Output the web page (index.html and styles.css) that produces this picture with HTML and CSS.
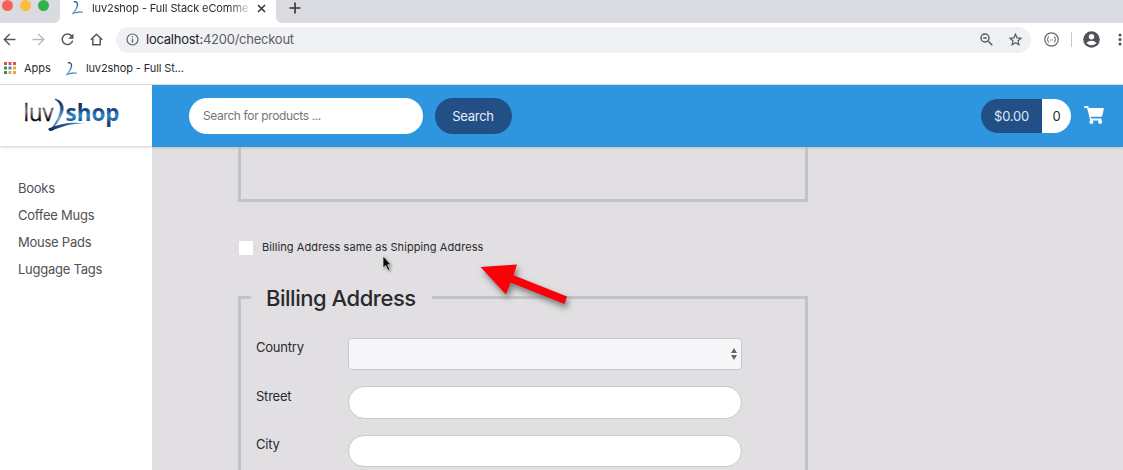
FILE: index.html
```html
<!DOCTYPE html>
<html lang="en">
<head>
<meta charset="utf-8">
<title>luv2shop - Full Stack eCommerce</title>
<link rel="stylesheet" href="styles.css">
</head>
<body>
<svg class="defs" width="0" height="0">
  <defs>
    <linearGradient id="swoosh" x1="0" y1="0" x2="0" y2="1"><stop offset="0" stop-color="#173f75"/><stop offset=".5" stop-color="#3f83c4"/><stop offset="1" stop-color="#7dbdeb"/></linearGradient>
    <symbol id="fav" viewBox="0 0 14 15"><path d="M2.800 1.700C5 1.400 6.800 2.300 6.500 5 6.100 8.500 4 11 1.800 13.300" fill="none" stroke="url(#swoosh)" stroke-width="1.400"/><path d="M1.200 14C4.500 11.500 8 11.300 12 12.200 8.500 12 4.500 12.700 1.200 14z" fill="#3b74ae" stroke="#3b74ae" stroke-width=".5"/></symbol>
  </defs>
</svg>
<div class="browser">
  <div class="tabs">
    <div class="lights"><i class="red"></i><i class="amber"></i><i class="green"></i></div>
    <div class="tab">
      <svg class="favicon" width="14" height="15"><use href="#fav"/></svg>
      <span class="tab-title">luv2shop - Full Stack eComme</span>
      <svg class="close" width="9" height="9" viewBox="0 0 9 9"><path d="M1 1l7 7M8 1L1 8" stroke="#333" stroke-width="1.500"/></svg>
    </div>
    <div class="newtab"><svg width="12" height="12" viewBox="0 0 12 12"><path d="M6 .5v11M.5 6h11" stroke="#333" stroke-width="1.600"/></svg></div>
  </div>
  <div class="toolbar">
    <div class="nav">
      <svg width="13" height="13" viewBox="0 0 13 13"><path d="M12.500 6.500H1.500M6.800 1L1.300 6.500 6.800 12" fill="none" stroke="#55585c" stroke-width="1.400"/></svg>
      <svg width="13" height="13" viewBox="0 0 13 13"><path d="M.5 6.500h11M6.200 1l5.500 5.500L6.200 12" fill="none" stroke="#b9babd" stroke-width="1.400"/></svg>
      <svg width="13" height="13" viewBox="0 0 13 13"><path d="M11.100 3.500A5.300 5.300 0 1 0 11.700 7.600" fill="none" stroke="#55585c" stroke-width="1.500"/><path d="M12.500.5v5.300H7.200z" fill="#55585c"/></svg>
      <svg width="13" height="13" viewBox="0 0 13 13"><path d="M.8 6.700L6.500 1.200l5.700 5.500M2.800 5.500v6.300h7.400V5.500" fill="none" stroke="#55585c" stroke-width="1.500"/></svg>
    </div>
    <div class="omnibox">
      <svg width="13" height="13" viewBox="0 0 13 13"><circle cx="6.500" cy="6.500" r="5.500" fill="none" stroke="#5f6368" stroke-width="1.200"/><path d="M6.500 5.700v4M6.500 3.200v1.400" stroke="#5f6368" stroke-width="1.300"/></svg>
      <span class="url"><b>localhost:</b>4200/checkout</span>
      <svg width="13" height="13" viewBox="0 0 13 13"><circle cx="5" cy="5" r="4" fill="none" stroke="#55585c" stroke-width="1.400"/><path d="M8 8l4.300 4.300M3.200 5h3.600" stroke="#55585c" stroke-width="1.400"/></svg>
      <svg class="star" width="13" height="13" viewBox="0 0 13 13"><path d="M6.500 1.200l1.550 3.650 3.950.35-3 2.600.9 3.900-3.400-2.050L3.100 11.700 4 7.800 1 5.200l3.950-.35z" fill="none" stroke="#55585c" stroke-width="1.200"/></svg>
    </div>
    <svg class="ext" width="15" height="15" viewBox="0 0 15 15"><circle cx="7.500" cy="7.500" r="6.700" fill="none" stroke="#66696d" stroke-width="1.200"/><path d="M5 4.500Q4 4.500 4 6T3 7.500Q4 7.500 4 9t1 1.500M10 4.500q1 0 1 1.500t1 1.500q-1 0-1 1.500t-1 1.500M6 8h1M8 8h1" fill="none" stroke="#66696d"/></svg>
    <span class="sep"></span>
    <svg class="person" width="17" height="17" viewBox="0 0 17 17"><circle cx="8.500" cy="8.500" r="8.300" fill="#505358"/><circle cx="8.500" cy="5.800" r="2.700" fill="#fff"/><path d="M3.300 12q5.200-4.500 10.400 0Q8.500 16.500 3.300 12z" fill="#fff"/></svg>
    <svg class="kebab" width="4" height="13" viewBox="0 0 4 13"><g fill="#505358"><circle cx="2" cy="2" r="1.500"/><circle cx="2" cy="6.500" r="1.500"/><circle cx="2" cy="11" r="1.500"/></g></svg>
  </div>
  <div class="bookmarks">
    <svg width="12" height="12" viewBox="0 0 12 12"><path d="M0 0h3v3H0zM4.500 0h3v3h-3zM9 0h3v3H9z" fill="#dd5044"/><path d="M0 4.500h3v3H0zM0 9h3v3H0z" fill="#2f9356"/><path d="M4.500 4.500h3v3h-3z" fill="#3b82f0"/><path d="M9 4.500h3v3H9zM4.500 9h3v3h-3zM9 9h3v3H9z" fill="#eda63a"/></svg>
    <span class="apps">Apps</span>
    <svg width="14" height="15"><use href="#fav"/></svg>
    <span class="mark">luv2shop - Full St...</span>
  </div>
</div>
<div class="page">
  <aside class="side">
    <div class="logo">
      <svg width="106" height="40" viewBox="0 0 106 40">
        <defs>
          <linearGradient id="grey" x1="0" y1="0" x2="0" y2="1"><stop offset=".25" stop-color="#333"/><stop offset=".48" stop-color="#777"/><stop offset=".75" stop-color="#050505"/></linearGradient>
          <linearGradient id="blue" x1="0" y1="0" x2="0" y2="1"><stop offset=".25" stop-color="#142b59"/><stop offset=".45" stop-color="#1c4a86"/><stop offset=".62" stop-color="#2f8ccd"/><stop offset=".85" stop-color="#173e78"/></linearGradient>
          <linearGradient id="tail" x1="0" y1="0" x2="1" y2="0"><stop offset="0" stop-color="#10264d"/><stop offset="1" stop-color="#46a5e3"/></linearGradient>
          <linearGradient id="two" x1="0" y1="0" x2="0" y2="1"><stop offset="0" stop-color="#142b59"/><stop offset=".3" stop-color="#225386"/><stop offset=".62" stop-color="#65b5e8"/><stop offset="1" stop-color="#142b59"/></linearGradient>
        </defs>
        <text class="luv" x="1.500" y="25" textLength="30" lengthAdjust="spacingAndGlyphs" fill="url(#grey)" stroke="url(#grey)" stroke-width=".3">luv</text>
        <text class="shop" x="43.500" y="25" textLength="54" lengthAdjust="spacingAndGlyphs" fill="url(#blue)">shop</text>
        <path d="M33 3C40 4.500 43 10 40.500 17 38 24 33 30 28.500 34 34 27 36.500 21 38.300 15 39.300 9 36.500 5.500 33 3.500z" fill="url(#two)" stroke="url(#two)" stroke-width=".5"/>
        <path d="M26.500 32.500C39 27 50 25.500 63 27.500 50 27.500 40 30 30 34.800 27.500 35.500 26 34.500 26.500 32.500z" fill="url(#tail)"/>
      </svg>
    </div>
    <nav class="menu"><a>Books</a><a>Coffee Mugs</a><a>Mouse Pads</a><a>Luggage Tags</a></nav>
  </aside>
  <main class="main">
    <header class="top">
      <div class="search">Search for products ...</div>
      <div class="button">Search</div>
      <div class="cart"><span class="total">$0.00</span><span class="count">0</span></div>
      <svg class="trolley" width="20" height="19" viewBox="0 0 20 19"><path d="M0 .8Q0 0 .8 0h2.700q.8 0 1 .8L4.700 2H19q1 0 .8 1l-1.600 7q-.2.800-1 .8H6.800l.3 1.700h9.600q1 0 .8 1l-.2.800a2 2 0 1 1-2.700.2H8.800a2 2 0 1 1-2.600-.2L3.100 2H.8Q0 2 0 1.200z" fill="#fff"/></svg>
    </header>
    <div class="content">
      <div class="previous"></div>
      <div class="same"><span class="box"></span><span>Billing Address same as Shipping Address</span></div>
      <section class="billing">
        <h3><span>Billing Address</span></h3>
        <div class="row"><label>Country</label><div class="select"><svg width="6" height="12" viewBox="0 0 6 12"><path d="M3 0l3 5H0zM0 7h6l-3 5z" fill="#666"/></svg></div></div>
        <div class="row"><label>Street</label><div class="input"></div></div>
        <div class="row"><label>City</label><div class="input"></div></div>
      </section>
    </div>
  </main>
</div>
<svg class="arrow" width="100" height="60" viewBox="0 0 100 60"><path d="M5.500 12L42 9.500l-3.500 10.800L92 41.500l-2.500 7.500L35.500 27.500l-4.500 12z" fill="#fb0007"/></svg>
<svg class="cursor" width="10" height="17" viewBox="0 0 10 17"><path d="M1 1v12l2.700-2.500 2.200 5 2-1-2.200-4.700H9z" fill="#080808" stroke="#f4f4f4" stroke-width=".7"/></svg>
</body>
</html>
```
FILE: styles.css
```css
* { box-sizing: border-box; }
body { margin: 0; width: 1123px; height: 470px; overflow: hidden; background: #fff; font-family: Inter, "Liberation Sans", sans-serif; color: #292a2e; }
svg { display: block; flex: none; }
.defs { position: absolute; }
.browser { height: 85px; border-bottom: 1px solid #dcdcdf; }
.tabs { display: flex; height: 23px; background: #fff; }
.lights { display: flex; gap: 7px; width: 60px; padding-left: 2px; background: #dadbe0; border-radius: 0 0 6px 0; overflow: hidden; }
.lights i { width: 11px; height: 11px; flex: none; border-radius: 50%; }
.red { background: #f96256; }
.amber { background: #fdbc40; }
.green { background: #35b14a; }
.tab { display: flex; width: 216px; padding-left: 11px; }
.tab-title { width: 161px; margin-left: 7px; white-space: nowrap; font-size: 11px; line-height: 16px; letter-spacing: -.1px; -webkit-mask-image: linear-gradient(90deg, #000 85%, transparent); mask-image: linear-gradient(90deg, #000 85%, transparent); }
.close { margin: 4px 0 0 4px; }
.newtab { flex: 1; padding: 2px 0 0 13px; background: #dadbe0; border-radius: 0 0 0 6px; }
.toolbar { display: flex; align-items: center; height: 33px; }
.nav { display: flex; gap: 16px; width: 116px; padding-left: 3px; }
.omnibox { display: flex; align-items: center; width: 915px; height: 26px; padding: 0 9px 0 10px; border-radius: 13px; background: #f0f1f5; }
.url { flex: 1; margin-left: 7px; padding-bottom: 1px; font-size: 13px; letter-spacing: -.24px; color: #5c5e62; }
.url b { font-weight: 400; color: #202124; }
.star { margin-left: 16px; }
.ext { margin-left: 13px; }
.sep { width: 1px; height: 15px; margin: 0 11px 0 12px; background: #c6c7ca; }
.kebab { margin-left: 18px; }
.bookmarks { display: flex; align-items: center; height: 25px; padding: 0 0 1px 4px; font-size: 11px; }
.apps { margin: 0 14px 0 8px; }
.mark { margin-left: 7px; letter-spacing: -.1px; }
.page { display: flex; height: 385px; }
.side { width: 152px; background: #fff; }
.logo { height: 61px; padding: 11px 0 0 22px; box-shadow: 0 1px 3px #ccc; clip-path: inset(0 0 -5px 0); }
.luv { font: 400 24px "Open Sans", sans-serif; }
.shop { font: 700 23px "Open Sans", sans-serif; }
.menu { display: flex; flex-direction: column; padding: 29px 0 0 18px; font-size: 13px; line-height: 27px; letter-spacing: -.25px; color: #505153; }
.main { flex: 1; background: #e1dfe2; }
.top { display: flex; align-items: center; height: 62px; padding: 0 19px 1px 37px; background: #2e96df; box-shadow: 0 1px 3px #bbb; clip-path: inset(0 0 -5px 0); }
.search { width: 234px; height: 36px; padding-left: 14px; border-radius: 18px; background: #fff; font-size: 12px; line-height: 35px; letter-spacing: -.37px; color: #757575; }
.button { width: 77px; height: 36px; margin-left: 12px; padding-right: 1px; border-radius: 18px; background: #224f86; color: #e8eef6; font-size: 13px; line-height: 37px; letter-spacing: -.25px; text-align: center; }
.cart { display: flex; width: 90px; height: 34px; margin: 1px 13px 0 auto; border-radius: 17px; overflow: hidden; font-size: 13px; line-height: 35px; letter-spacing: -.2px; text-align: center; }
.total { width: 61px; background: #224f86; color: #dfe9f4; }
.count { flex: 1; background: #fff; }
.content { padding-left: 86px; }
.previous { width: 570px; height: 55px; border: 3px solid #c3c2c5; border-top: 0; }
.same { display: flex; align-items: center; height: 94px; padding-bottom: 4px; font-size: 11px; letter-spacing: .08px; }
.box { width: 14px; height: 14px; margin: 2px 9px 0 1px; background: #fff; }
.billing { width: 570px; height: 190px; border: 3px solid #c3c2c5; }
.billing h3 { height: 39px; margin: -3px 0 0 10px; font-size: 22px; font-weight: 500; line-height: 5px; letter-spacing: -.47px; }
.billing h3 span { display: inline-block; width: 181px; height: 7px; padding-left: 15px; background: #e1dfe2; }
.row { display: flex; height: 48.500px; padding-left: 15px; }
.row label { width: 92px; font-size: 13px; line-height: 25px; letter-spacing: -.22px; }
.select, .input { width: 394px; height: 32.500px; margin-top: 2.500px; border: 1px solid #c9c9cc; border-radius: 17px; background: #fff; }
.select { display: flex; align-items: center; justify-content: flex-end; padding-right: 4px; border-radius: 4px; background: #f7f6f9; }
.arrow { position: absolute; left: 475px; top: 255px; filter: drop-shadow(2px 4px 3px #777); }
.cursor { position: absolute; left: 382px; top: 255px; filter: drop-shadow(1px 1px 1px #888); }
```
